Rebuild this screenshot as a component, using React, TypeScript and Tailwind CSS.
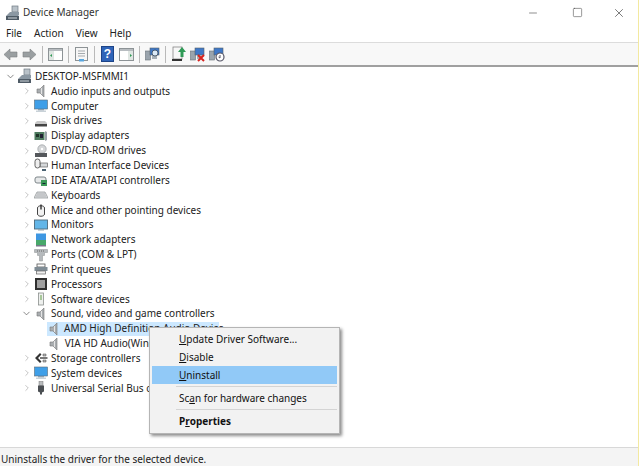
import React from "react";
import { ChevronRight, ChevronDown, Minus, Square, X } from "lucide-react";

type IconName =
  | "pc" | "speaker" | "monitor" | "disk" | "card" | "dvd" | "hid" | "ide" | "keyboard" | "mouse"
  | "screen" | "network" | "port" | "printer" | "cpu" | "software" | "storage" | "usb";

const Speaker = ({ fill = "#a9adb0" }: { fill?: string }) => (
  <svg width="14" height="14" viewBox="0 0 14 14">
    <path d="M3 5h3l4-4v12L6 9H3z" fill={fill} stroke="#777" strokeWidth="0.6" />
    <path d="M7.5 4v6" stroke="#e4e4e4" />
  </svg>
);

const DeviceIcon = ({ name }: { name: IconName }) => {
  switch (name) {
    case "pc":
      return (
        <svg width="16" height="16" viewBox="0 0 16 16">
          <rect x="7" y="1" width="6" height="6" fill="#b9c2c9" stroke="#6f7a82" strokeWidth="0.7" />
          <path d="M1 11l4-4h9v3L11 13H2z" fill="#8b98a3" />
          <rect x="1" y="11" width="13" height="4" fill="#4f5b66" />
          <path d="M3 13h9" stroke="#cfd6da" />
        </svg>
      );
    case "speaker":
      return <Speaker />;
    case "monitor":
      return (
        <svg width="14" height="14" viewBox="0 0 14 14">
          <rect x="0.5" y="1" width="13" height="9" fill="#3f9fe8" stroke="#5b6b78" strokeWidth="0.6" />
          <rect x="4" y="10" width="6" height="1.5" fill="#8da0ad" />
          <rect x="2" y="11.5" width="10" height="1.5" fill="#c9d2d8" />
        </svg>
      );
    case "disk":
      return (
        <svg width="14" height="14" viewBox="0 0 14 14">
          <path d="M1 9l2-2h8l2 2v3H1z" fill="#c8c8c8" />
          <rect x="1" y="10" width="12" height="2.5" fill="#444" />
        </svg>
      );
    case "card":
      return (
        <svg width="14" height="14" viewBox="0 0 14 14">
          <rect x="0.5" y="3" width="10" height="8" fill="#4d7a5e" />
          <rect x="2" y="5" width="3" height="3" fill="#1f3328" />
          <rect x="6" y="5" width="3" height="4" fill="#223" />
          <path d="M11 2l2 1v8l-2 1z" fill="#9aa3a9" />
        </svg>
      );
    case "dvd":
      return (
        <svg width="14" height="14" viewBox="0 0 14 14">
          <circle cx="8" cy="5" r="4.2" fill="#d4d6d8" stroke="#8c9094" strokeWidth="0.6" />
          <circle cx="8" cy="5" r="1.2" fill="#fff" />
          <rect x="1" y="9" width="12" height="4" fill="#55585c" />
        </svg>
      );
    case "hid":
      return (
        <svg width="14" height="14" viewBox="0 0 14 14">
          <rect x="1" y="1" width="5" height="9" rx="2.4" fill="#eee" stroke="#555" strokeWidth="0.9" />
          <rect x="6.5" y="5" width="7" height="4" fill="#d5d8da" stroke="#666" strokeWidth="0.7" />
          <path d="M8 11h4v2H8z" fill="#4a6272" />
        </svg>
      );
    case "ide":
      return (
        <svg width="14" height="14" viewBox="0 0 14 14">
          <rect x="1" y="4" width="11" height="6" rx="2" fill="#e6e8e9" stroke="#7d8589" />
          <rect x="7" y="7" width="6" height="6" fill="#3d9a58" />
          <path d="M8.5 10.5h3" stroke="#123" />
        </svg>
      );
    case "keyboard":
      return (
        <svg width="14" height="14" viewBox="0 0 14 14">
          <path d="M3 4h8l3 6H0z" fill="#dcdedf" stroke="#8b8f92" strokeWidth="0.7" />
          <path d="M3 6h8M2 8h10" stroke="#a1a5a8" strokeWidth="0.8" />
        </svg>
      );
    case "mouse":
      return (
        <svg width="14" height="14" viewBox="0 0 14 14">
          <path d="M3.5 5c0-3 7-3 7 0v6c0 3-7 3-7 0z" fill="#f2f2f2" stroke="#444" strokeWidth="1" />
          <path d="M7 1.5v5" stroke="#333" strokeWidth="1.4" />
        </svg>
      );
    case "screen":
      return (
        <svg width="14" height="14" viewBox="0 0 14 14">
          <rect x="0.5" y="2" width="13" height="9" fill="#63b6e8" stroke="#4f6a7c" strokeWidth="0.9" />
          <rect x="4" y="11" width="6" height="1.5" fill="#9baab3" />
        </svg>
      );
    case "network":
      return (
        <svg width="14" height="14" viewBox="0 0 14 14">
          <rect x="2" y="0.5" width="10" height="7" fill="#3e97e2" />
          <rect x="2" y="7" width="10" height="5" fill="#48a86a" />
          <rect x="2" y="12" width="10" height="1.5" fill="#778" />
        </svg>
      );
    case "port":
      return (
        <svg width="14" height="14" viewBox="0 0 14 14">
          <path d="M0.5 1.5h13v3h-3v3H8.5v5.5h-3V7.5H3.5v-3h-3z" fill="#b6babd" stroke="#8c9093" strokeWidth="0.5" />
          <path d="M3 3h8" stroke="#666" strokeDasharray="1 1" />
        </svg>
      );
    case "printer":
      return (
        <svg width="14" height="14" viewBox="0 0 14 14">
          <rect x="3" y="2" width="8" height="3" fill="#fff" stroke="#555" strokeWidth="0.8" />
          <rect x="0.5" y="5" width="13" height="4" fill="#7f8c95" />
          <rect x="2.5" y="9" width="9" height="3" fill="#f0f0f0" stroke="#666" strokeWidth="0.7" />
        </svg>
      );
    case "cpu":
      return (
        <svg width="14" height="14" viewBox="0 0 14 14">
          <rect x="1" y="1" width="12" height="12" fill="#2f2f2f" />
          <rect x="3" y="3" width="8" height="8" fill="#a0a0a0" />
        </svg>
      );
    case "software":
      return (
        <svg width="14" height="14" viewBox="0 0 14 14">
          <rect x="4.5" y="1" width="5" height="12" fill="#eef0ee" stroke="#8a8f8d" strokeWidth="0.8" />
          <rect x="6" y="3" width="2" height="5" fill="#a7c79a" />
        </svg>
      );
    case "storage":
      return (
        <svg width="14" height="14" viewBox="0 0 14 14">
          <path d="M1 7l5-5 1.5 1.5L4 7l3.5 3.5L6 12z" fill="#333" />
          <path d="M6 6.2h7.5v1.6H6z" fill="#555" />
          <path d="M9 3h3v2H9zM9 9h3v2H9z" fill="#bbb" stroke="#444" strokeWidth="0.5" />
        </svg>
      );
    case "usb":
      return (
        <svg width="14" height="14" viewBox="0 0 14 14">
          <rect x="5" y="0.5" width="4" height="4" fill="#b9bcbe" stroke="#777" strokeWidth="0.5" />
          <path d="M4 4.5h6v6l-2 1v2H6v-2l-2-1z" fill="#4b4f53" />
        </svg>
      );
  }
};

const ToolButton = ({ children }: { children: React.ReactNode }) => (
  <div className="w-[19px] h-[19px] flex items-center justify-center">{children}</div>
);

const ToolSep = () => <div className="w-px h-[17px] bg-[#b9b9b9] mx-[3px]" />;

const Arrow = ({ flip }: { flip?: boolean }) => (
  <svg width="15" height="13" viewBox="0 0 15 13" className={flip ? "-scale-x-100" : ""}>
    <path d="M1 6.5L7 1v3h7v5H7v3z" fill="#9a9fa1" stroke="#7c8082" strokeWidth="0.6" />
  </svg>
);

const PaneIcon = ({ right }: { right?: boolean }) => (
  <svg width="15" height="13" viewBox="0 0 15 13">
    <rect x="0.5" y="0.5" width="14" height="12" fill="#fff" stroke="#8d9396" />
    <rect x="1" y="1" width="13" height="2" fill="#b7bcc0" />
    <rect x={right ? 9 : 1} y="3" width="5" height="9" fill="#dfe6e2" />
    <path d={right ? "M11 6v3l2-1.5z" : "M4 6v3l-2-1.5z"} fill="#2f9a56" />
  </svg>
);

const SheetIcon = () => (
  <svg width="15" height="15" viewBox="0 0 15 15">
    <rect x="1.5" y="0.5" width="12" height="13" fill="#f6f6f6" stroke="#8d9396" />
    <path d="M4 4h7M4 6.5h7M4 9h7" stroke="#a5aaae" />
    <rect x="5" y="12" width="5" height="2.5" fill="#58a6df" />
  </svg>
);

const HelpIcon = () => (
  <div className="w-[13px] h-[16px] bg-[#2f64b8] border border-[#1d4488] flex items-center justify-center text-white text-[12px] font-bold leading-none font-['Liberation_Sans',sans-serif]">
    ?
  </div>
);

const PcSmall = ({ children }: { children?: React.ReactNode }) => (
  <svg width="16" height="15" viewBox="0 0 16 15">
    <rect x="0.5" y="4" width="5" height="9" fill="#9aa4ad" stroke="#68727a" strokeWidth="0.6" />
    <rect x="5" y="1" width="9" height="7" fill="#3f78c8" stroke="#56616a" strokeWidth="0.6" />
    <rect x="7" y="8" width="5" height="4" fill="#a6afb6" />
    {children}
  </svg>
);

const devices: { label: string; icon: IconName }[] = [
  { label: "Audio inputs and outputs", icon: "speaker" },
  { label: "Computer", icon: "monitor" },
  { label: "Disk drives", icon: "disk" },
  { label: "Display adapters", icon: "card" },
  { label: "DVD/CD-ROM drives", icon: "dvd" },
  { label: "Human Interface Devices", icon: "hid" },
  { label: "IDE ATA/ATAPI controllers", icon: "ide" },
  { label: "Keyboards", icon: "keyboard" },
  { label: "Mice and other pointing devices", icon: "mouse" },
  { label: "Monitors", icon: "screen" },
  { label: "Network adapters", icon: "network" },
  { label: "Ports (COM & LPT)", icon: "port" },
  { label: "Print queues", icon: "printer" },
  { label: "Processors", icon: "cpu" },
  { label: "Software devices", icon: "software" },
];

const after: { label: string; icon: IconName }[] = [
  { label: "Storage controllers", icon: "storage" },
  { label: "System devices", icon: "monitor" },
  { label: "Universal Serial Bus controllers", icon: "usb" },
];

const TreeRow = ({ label, icon, open }: { label: string; icon: IconName; open?: boolean }) => (
  <div className="h-[14.85px] flex items-center pl-[20px] whitespace-nowrap">
    <div className="w-[13px] flex justify-center text-[#8b8b8b]">
      {open ? <ChevronDown size={11} strokeWidth={1.5} className="text-[#555]" /> : <ChevronRight size={10} strokeWidth={1.5} className="text-[#a0a0a0]" />}
    </div>
    <div className="w-[14px] ml-[1px] flex justify-center"><DeviceIcon name={icon} /></div>
    <span className="ml-[3px]">{label}</span>
  </div>
);

const ChildRow = ({ label, selected, labelWidth }: { label: string; selected?: boolean; labelWidth: string }) => (
  <div className="h-[14.85px] flex items-center pl-[47px] whitespace-nowrap">
    <div className={`flex items-center h-[14px] pr-[2px] ${selected ? "bg-[#cce8ff]" : ""} ${labelWidth}`}>
      <div className="w-[16px] flex justify-center"><Speaker /></div>
      <span className="ml-[3px]">{label}</span>
    </div>
  </div>
);

const MenuItem = ({ first, rest, u, bold, active }: { first?: string; u: string; rest: string; bold?: boolean; active?: boolean }) => (
  <div className={`h-[18px] flex items-center pl-[27px] ${active ? "bg-[#91c9f7]" : ""} ${bold ? "font-bold" : ""}`}>
    {first}
    <span className="underline">{u}</span>
    {rest}
  </div>
);

const App = () => {
  return (
    <div className="relative w-[639px] h-[466px] bg-white overflow-hidden text-[#222] text-[10px] font-['Noto_Sans',sans-serif] border-r border-[#f3e9a0]">
      {/* title bar */}
      <div className="h-[25px] flex items-center pl-[5px]">
        <DeviceIcon name="pc" />
        <span className="ml-[2px] text-[10px] text-[#333]">Device Manager</span>
        <div className="ml-auto flex items-center text-[#444]">
          <Minus size={12} strokeWidth={1.2} className="mr-[33px]" />
          <Square size={11} strokeWidth={1.2} className="mr-[29px]" />
          <X size={14} strokeWidth={1.2} className="mr-[12px]" />
        </div>
      </div>
      {/* menu */}
      <div className="h-[18px] flex items-center pl-[6px] gap-[12px] border-b border-[#dcdcdc]">
        <span>File</span>
        <span>Action</span>
        <span>View</span>
        <span>Help</span>
      </div>
      {/* toolbar */}
      <div className="h-[24px] flex items-center pl-[1px] bg-[#f8f8f8] border-b-2 border-[#a0a0a0]">
        <ToolButton><Arrow /></ToolButton>
        <ToolButton><Arrow flip /></ToolButton>
        <ToolSep />
        <ToolButton><PaneIcon /></ToolButton>
        <ToolSep />
        <ToolButton><SheetIcon /></ToolButton>
        <ToolSep />
        <ToolButton><HelpIcon /></ToolButton>
        <ToolButton><PaneIcon right /></ToolButton>
        <ToolSep />
        <ToolButton>
          <PcSmall><circle cx="10" cy="6" r="3" fill="#dbe9f5" stroke="#345" strokeWidth="0.8" /></PcSmall>
        </ToolButton>
        <ToolSep />
        <ToolButton>
          <svg width="16" height="16" viewBox="0 0 16 16">
            <rect x="2" y="1" width="9" height="12" fill="#f7f7f7" stroke="#777" strokeWidth="0.7" />
            <rect x="1" y="13" width="10" height="2" fill="#333" />
            <path d="M11 1l4 5h-2.500v5h-3V6H7z" fill="#2f9a56" />
          </svg>
        </ToolButton>
        <ToolButton>
          <PcSmall><path d="M8 8l6 6M14 8l-6 6" stroke="#d8231f" strokeWidth="2" /></PcSmall>
        </ToolButton>
        <ToolButton>
          <PcSmall><circle cx="11" cy="10" r="4" fill="#fff" stroke="#556" strokeWidth="1.200" /><path d="M11 8v3l-1.500-1" stroke="#556" fill="none" /></PcSmall>
        </ToolButton>
      </div>
      {/* tree */}
      <div className="pt-[2px]">
        <div className="h-[14.85px] flex items-center pl-[4px] whitespace-nowrap">
          <div className="w-[12px] flex justify-center"><ChevronDown size={11} strokeWidth={1.5} className="text-[#555]" /></div>
          <div className="w-[16px] ml-[1px] flex justify-center"><DeviceIcon name="pc" /></div>
          <span className="ml-[2px]">DESKTOP-MSFMMI1</span>
        </div>
        {devices.map((d) => (
          <TreeRow key={d.label} label={d.label} icon={d.icon} />
        ))}
        <TreeRow label="Sound, video and game controllers" icon="speaker" open />
        <ChildRow label="AMD High Definition Audio Device" selected labelWidth="w-[172px]" />
        <ChildRow label="VIA HD Audio(Wind" labelWidth="w-[110px] overflow-hidden" />
        {after.map((d) => (
          <TreeRow key={d.label} label={d.label} icon={d.icon} />
        ))}
      </div>
      {/* status bar */}
      <div className="absolute left-0 right-0 bottom-0 h-[19px] border-t border-[#d8d8d8] bg-[#f4f4f4] flex items-center pl-[1px] pt-[5px]">
        Uninstalls the driver for the selected device.
      </div>
      {/* context menu */}
      <div className="absolute left-[149px] top-[327px] w-[191px] h-[107px] bg-[#f2f2f2] border border-[#b5b5b5] shadow-[2px_2px_3px_rgba(0,0,0,0.45)] p-[2px] pt-[2px] text-[#111]">
        <MenuItem u="U" first="" rest="pdate Driver Software..." />
        <MenuItem u="D" first="" rest="isable" />
        <MenuItem u="U" first="" rest="ninstall" active />
        <div className="h-px bg-[#d4d4d4] ml-[24px] my-[2px]" />
        <MenuItem first="Sc" u="a" rest="n for hardware changes" />
        <div className="h-px bg-[#d4d4d4] ml-[24px] my-[2px]" />
        <MenuItem first="P" u="r" rest="operties" bold />
      </div>
    </div>
  );
};

export default App;
